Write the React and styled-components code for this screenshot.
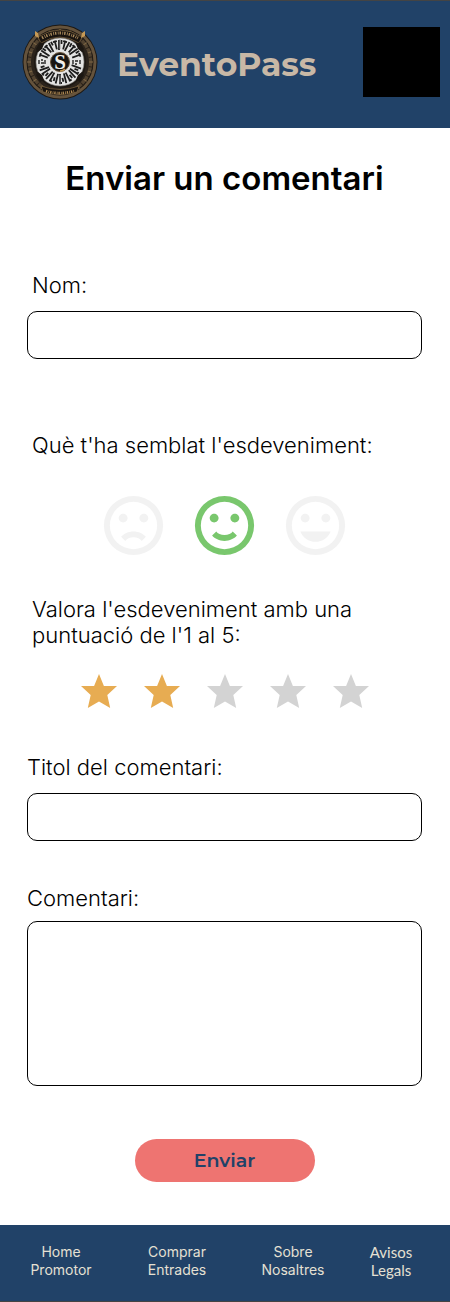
import React, { useState } from "react";
import styled, { createGlobalStyle } from "styled-components";

const GlobalStyle = createGlobalStyle`
  * { box-sizing: border-box; }
  body { margin: 0; background: #fff; color: #000; font-family: Inter, sans-serif; }
`;

const Page = styled.div`
  display: flex;
  flex-direction: column;
  min-height: 100vh;
`;

const Header = styled.header`
  display: flex;
  align-items: flex-start;
  justify-content: space-between;
  padding: 23px 10px 28px 21px;
  border-top: 1px solid #444;
  background: #214268;
`;

const Brand = styled.a`
  display: flex;
  align-items: center;
  gap: 18px;
  color: #c8b8a6;
  text-decoration: none;
`;

const BrandName = styled.span`
  padding-top: 4px;
  font: 700 33px/40px Montserrat, Inter, sans-serif;
`;

const MenuButton = styled.button`
  width: 77px;
  height: 70px;
  margin-top: 3px;
  padding: 0;
  border: 0;
  background: #000;
`;

const Form = styled.form`
  display: flex;
  flex-direction: column;
  padding: 28px 28px 43px 27px;
`;

const Title = styled.h1`
  margin: 0 0 72px;
  text-align: center;
  font-size: 33px;
  line-height: 44px;
  font-weight: 600;
`;

const Field = styled.div`
  display: flex;
  flex-direction: column;
  gap: ${(p) => p.$gap}px;
  margin-bottom: ${(p) => p.$after}px;
`;

const Label = styled.label`
  padding-left: ${(p) => (p.$inset ? 5 : 0)}px;
  font-size: 22px;
  line-height: 26px;
  font-weight: 350;
`;

const Group = styled.fieldset`
  min-width: 0;
  margin: 0 0 ${(p) => p.$after}px;
  padding: 0;
  border: 0;
`;

const Legend = styled.legend`
  max-width: 370px;
  padding: 0 0 0 5px;
  font-size: 22px;
  line-height: 26px;
  font-weight: 350;
`;

const Input = styled.input`
  width: 100%;
  height: 48px;
  padding: 0 12px;
  border: 1px solid #000;
  border-radius: 10px;
  background: #fff;
  font: 20px Inter, sans-serif;
`;

const TextArea = styled.textarea`
  display: block;
  width: 100%;
  height: 165px;
  padding: 12px;
  border: 1px solid #000;
  border-radius: 10px;
  background: #fff;
  font: 20px Inter, sans-serif;
  resize: none;
`;

const Choices = styled.div`
  display: flex;
  justify-content: center;
  gap: ${(p) => p.$gap}px;
  padding-top: ${(p) => p.$top}px;
`;

const Choice = styled.label`
  position: relative;
  display: block;
  color: ${(p) => p.$color};
  cursor: pointer;

  svg { display: block; }
`;

const HiddenRadio = styled.input`
  position: absolute;
  inset: 0;
  width: 100%;
  height: 100%;
  margin: 0;
  opacity: 0;
`;

const Submit = styled.button`
  align-self: center;
  width: 180px;
  height: 43px;
  padding: 0;
  border: 0;
  border-radius: 22px;
  background: #ee7471;
  color: #214268;
  font: 600 19px Montserrat, Inter, sans-serif;
`;

const Footer = styled.footer`
  display: grid;
  grid-template-columns: repeat(3, 1fr) 80px;
  flex-grow: 1;
  align-items: start;
  padding: 18px 19px 21px 3px;
  border-bottom: 1px solid #444;
  background: #214268;
`;

const FooterLink = styled.a`
  display: flex;
  flex-direction: column;
  align-items: center;
  color: #e5e0d3;
  font-family: ${(p) => (p.$lato ? "Lato" : "Inter")}, sans-serif;
  font-size: ${(p) => (p.$lato ? 15 : 14)}px;
  line-height: 18px;
  text-decoration: none;
`;

const spokes = [-70, -56, -42, -28, -14, 0, 14, 28, 42, 56, 70];
const notches = Array.from({ length: 40 }, (_, i) => i * 9);

function Logo() {
  return (
    <svg width="78" height="76" viewBox="-39 -38 78 76" aria-hidden="true">
      <circle r="37.5" fill="#1d1813" />
      <circle r="35" fill="none" stroke="#65533c" strokeWidth="3" />
      <circle r="30.5" fill="none" stroke="#524330" strokeWidth="4" />
      {notches.map((a) => (
        <path key={a} d="M0-33v4" stroke={a % 2 ? "#2a211a" : "#806946"} transform={`rotate(${a})`} />
      ))}
      <circle r="27.5" fill="none" stroke="#2b231b" strokeWidth="3" />
      <path d="M-22-25Q0-39 22-25L19-19Q0-31-19-19Z" fill="#18130f" stroke="#8d7047" strokeWidth=".6" />
      <path d="M-18-24Q0-34 18-24" fill="none" stroke="#a98a5c" strokeWidth="3" strokeDasharray="1.4 1.4 .8 1" />
      <path d="M-19 24Q0 31 19 24L17 30Q0 35-17 30Z" fill="#18130f" stroke="#8d7047" strokeWidth=".6" />
      <path d="M-14 29Q0 33 14 29" fill="none" stroke="#b48d55" strokeWidth="2.6" strokeDasharray="1.3 1.2 .7 1" />
      <path d="M-25-31l3 2 1 5-4-2zM25-31l-3 2-1 5 4-2z" fill="#c79a56" />
      <circle r="24" fill="#e4e4e3" stroke="#8d8a85" strokeWidth=".6" />
      <path d="M-24-13l4-7 4 2-2 5-4 3zM24-13l-4-7-4 2 2 5 4 3zM-24 13l4 7 4-2-2-5-4-3zM24 13l-4 7-4-2 2-5 4-3z" fill="#1c1712" />
      {spokes.map((a, i) => (
        <g key={a} stroke="#1c1c1c" strokeWidth="1.8" fill="none">
          <path d={i % 2 ? "M-1-22v10M1.500-22v4" : "M0-22v9M-2-21h4"} transform={`rotate(${a})`} />
          <path d={i % 2 ? "M0-22v10M-2-21h3" : "M-1-22v10M1.500-20v4"} transform={`rotate(${a + 180})`} />
        </g>
      ))}
      <path d="M0-23v10M0 13v10" stroke="#909090" strokeWidth=".8" />
      <path d="M-21-2v4M-19-2h2M-19 1h3M-15-2v4M13-2v4M15-1h3M15 2h2M20-2v4" stroke="#222" strokeWidth="1.4" />
      <circle r="9.5" fill="#181512" stroke="#69543a" />
      <text y="7" textAnchor="middle" fontFamily="Liberation Serif, serif" fontWeight="700" fontSize="21" fill="#f2f0eb">S</text>
      <path d="M0 9q3 0 5-2" fill="none" stroke="#c79a56" strokeWidth="1.4" />
    </svg>
  );
}

const RING =
  "M20,12A8,8 0 0,0 12,4A8,8 0 0,0 4,12A8,8 0 0,0 12,20A8,8 0 0,0 20,12M22,12A10,10 0 0,1 12,22A10,10 0 0,1 2,12A10,10 0 0,1 12,2A10,10 0 0,1 22,12Z";
const EYES =
  "M10,9.5C10,10.3 9.3,11 8.5,11C7.7,11 7,10.3 7,9.5C7,8.7 7.7,8 8.5,8C9.3,8 10,8.7 10,9.5M17,9.5C17,10.3 16.3,11 15.5,11C14.7,11 14,10.3 14,9.5C14,8.7 14.7,8 15.5,8C16.3,8 17,8.7 17,9.5Z";

const faces = [
  { name: "Malament", mouth: "M12,14C13.75,14 15.29,14.72 16.19,15.81L14.77,17.23C14.32,16.5 13.25,16 12,16C10.75,16 9.68,16.5 9.23,17.23L7.81,15.81C8.71,14.72 10.25,14 12,14Z" },
  { name: "Bé", mouth: "M12,17.23C10.25,17.23 8.71,16.5 7.81,15.42L9.23,14C9.68,14.72 10.75,15.23 12,15.23C13.25,15.23 14.32,14.72 14.77,14L16.19,15.42C15.29,16.5 13.75,17.23 12,17.23Z" },
  { name: "Molt bé", mouth: "M12,17.5C14.33,17.5 16.3,16.04 17.11,14H6.89C7.69,16.04 9.67,17.5 12,17.5Z" },
];

const links = [
  ["Home", "Promotor"],
  ["Comprar", "Entrades"],
  ["Sobre", "Nosaltres"],
  ["Avisos", "Legals"],
];

export default function App() {
  const [mood, setMood] = useState(1);
  const [rating, setRating] = useState(2);

  return (
    <Page>
      <GlobalStyle />
      <Header>
        <Brand href="#">
          <Logo />
          <BrandName>EventoPass</BrandName>
        </Brand>
        <MenuButton type="button" aria-label="Menú" />
      </Header>

      <Form onSubmit={(e) => e.preventDefault()}>
        <Title>Enviar un comentari</Title>

        <Field $gap={13} $after={73}>
          <Label htmlFor="nom" $inset>Nom:</Label>
          <Input id="nom" />
        </Field>

        <Group $after={35}>
          <Legend>Què t'ha semblat l'esdeveniment:</Legend>
          <Choices $gap={20} $top={32}>
            {faces.map((face, i) => (
              <Choice key={face.name} $color={i === mood ? "#79c76d" : "#f2f2f2"}>
                <HiddenRadio type="radio" name="mood" aria-label={face.name} checked={i === mood} onChange={() => setMood(i)} />
                <svg width="71" height="71" viewBox="0 0 24 24" fill="currentColor" aria-hidden="true">
                  <path d={RING} />
                  <path d={EYES} />
                  <path d={face.mouth} />
                </svg>
              </Choice>
            ))}
          </Choices>
        </Group>

        <Group $after={46}>
          <Legend>Valora l'esdeveniment amb una puntuació de l'1 al 5:</Legend>
          <Choices $gap={27} $top={26}>
            {[1, 2, 3, 4, 5].map((n) => (
              <Choice key={n} $color={n <= rating ? "#e7ac52" : "#d3d3d3"}>
                <HiddenRadio type="radio" name="rating" aria-label={String(n)} checked={n === rating} onChange={() => setRating(n)} />
                <svg width="36" height="34" viewBox="0 0 36 34" fill="currentColor" aria-hidden="true">
                  <path d="M18 0L22.9 12H36L26.3 21L29.2 34L18 27.5L6.8 34L9.7 21L0 12H13.1Z" />
                </svg>
              </Choice>
            ))}
          </Choices>
        </Group>

        <Field $gap={13} $after={44}>
          <Label htmlFor="titol">Titol del comentari:</Label>
          <Input id="titol" />
        </Field>

        <Field $gap={10} $after={53}>
          <Label htmlFor="comentari">Comentari:</Label>
          <TextArea id="comentari" />
        </Field>

        <Submit type="submit">Enviar</Submit>
      </Form>

      <Footer>
        {links.map(([top, bottom]) => (
          <FooterLink key={top} href="#" $lato={top === "Avisos"}>
            <span>{top}</span>
            <span>{bottom}</span>
          </FooterLink>
        ))}
      </Footer>
    </Page>
  );
}
